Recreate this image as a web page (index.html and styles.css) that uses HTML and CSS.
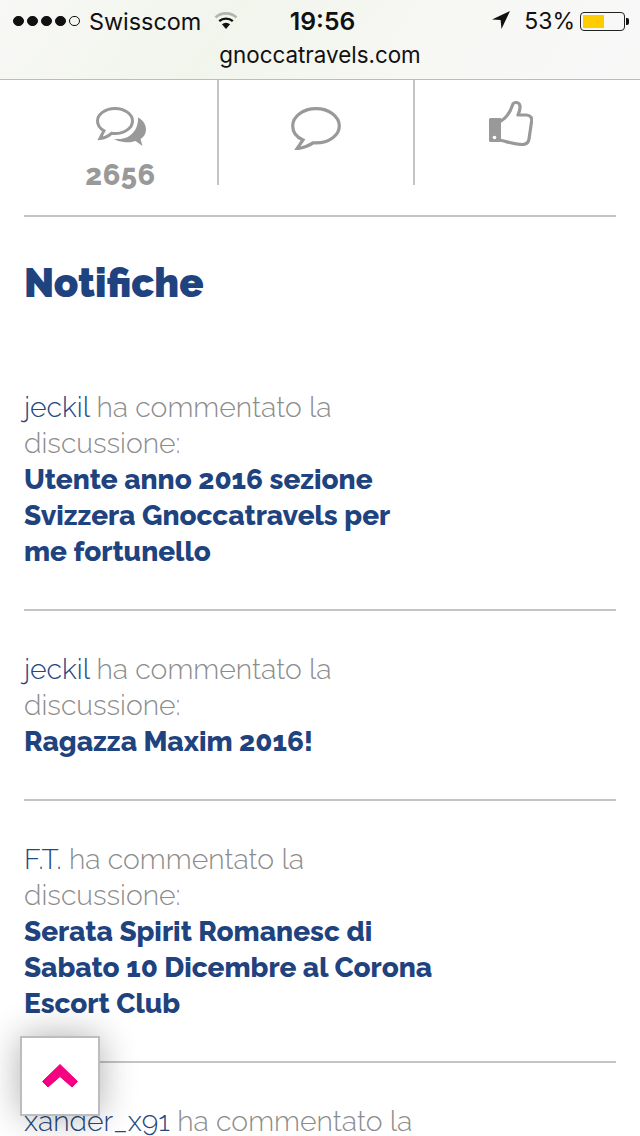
FILE: index.html
```html
<!DOCTYPE html>
<html lang="it">
<head>
<meta charset="utf-8">
<title>Notifiche</title>
<link rel="stylesheet" href="styles.css">
</head>
<body>
<header class="status">
  <div class="status-row">
    <div class="status-left">
      <span class="dots"><i class="dot"></i><i class="dot"></i><i class="dot"></i><i class="dot"></i><i class="dot empty"></i></span>
      <span class="carrier">Swisscom</span>
      <svg class="wifi" width="24" height="18" viewBox="0 0 24 18"><path d="M1.5 6.5a15.5 15.5 0 0 1 21 0" fill="none" stroke="#b4b4b0" stroke-width="2.6"/><path d="M5.2 10.2a10.2 10.2 0 0 1 13.6 0" fill="none" stroke="#111" stroke-width="2.4"/><path d="M12 18 7.9 13.3a6.2 6.2 0 0 1 8.2 0Z" fill="#111"/></svg>
    </div>
    <div class="clock">19:56</div>
    <div class="status-right">
      <svg class="arrow" width="18" height="18" viewBox="0 0 18 18"><path d="M18 0 0 8.4l8.6.6.9 9Z" fill="#111"/></svg>
      <span class="pct">53%</span>
      <span class="battery"><span class="level"></span></span><span class="nub"></span>
    </div>
  </div>
  <div class="url">gnoccatravels.com</div>
</header>

<section class="tabs">
  <div class="tab">
    <svg width="50" height="40" viewBox="0 0 50 40"><path d="M19 1.500C9.500 1.500 1.500 7 1.500 14c0 4 2.500 7.500 6.500 9.700L4 31.500c4.500-.5 8.500-2.500 11.500-5.200 1.200.2 2.300.2 3.500.2 9.500 0 17.500-5.500 17.500-12.500S28.500 1.500 19 1.500Z" fill="none" stroke="#999" stroke-width="3"/><path d="M42 10.500c5 2.500 8 7 8 12 0 4-2 7.500-5.500 9.500l2 7-7-5c-4 1.500-8 1.500-12 1-3.500-.5-7-1.500-9.500-3 6 .5 12-.5 16-3.500 5.500-4 8.500-11 8-18Z" fill="#999"/></svg>
    <span class="count">2656</span>
  </div>
  <div class="tab">
    <svg width="50" height="43" viewBox="0 0 50 43"><path d="M25 1.700C12 1.700 1.700 9.500 1.700 19c0 6 4 11.200 10.300 14l-6 8.700c6.500-1 12-3 16-5.800h3c13 0 23.300-7.500 23.300-16.900S38 1.700 25 1.700Z" fill="none" stroke="#999" stroke-width="3.200"/></svg>
  </div>
  <div class="tab thumb">
    <svg width="44" height="46" viewBox="0 0 44 46"><path d="M1.500 18H12V42H1.500A1.500 1.500 0 0 1 0 40.500V19.500A1.500 1.500 0 0 1 1.500 18Z" fill="#999"/><circle cx="5.500" cy="37.500" r="1.800" fill="#fff"/><path d="M12 21c5-3 9-8 11.500-16 1-3.500 7-3.500 7.500 1 .3 3-.7 6-2 9h8c4.500 0 6.500 3 5.500 7l-2.500 17c-.5 3.500-3 5.500-6.500 5.500-7 0-11-1.500-21-4" fill="none" stroke="#999" stroke-width="3.200" stroke-linejoin="round" stroke-linecap="round"/></svg>
  </div>
</section>

<main class="content">
  <h1 class="title">Notifiche</h1>
  <article class="note">
    <p class="line"><a class="user">jeckil</a> ha commentato la discussione:</p>
    <a class="topic">Utente anno 2016 sezione Svizzera Gnoccatravels per me fortunello</a>
  </article>
  <article class="note">
    <p class="line"><a class="user">jeckil</a> ha commentato la discussione:</p>
    <a class="topic">Ragazza Maxim 2016!</a>
  </article>
  <article class="note">
    <p class="line"><a class="user">F.T.</a> ha commentato la discussione:</p>
    <a class="topic">Serata Spirit Romanesc di Sabato 10 Dicembre al Corona Escort Club</a>
  </article>
  <article class="note">
    <p class="line"><a class="user">xander_x91</a> ha commentato la discussione:</p>
  </article>
</main>

<button class="top" aria-label="Torna su">
  <svg width="38" height="26" viewBox="0 0 38 26"><path d="M19 1.500 36.500 18.500 31 24 19 13.500 7 24 1.500 18.500Z" fill="#f5007f" stroke="#f5007f" stroke-width="1" stroke-linejoin="round"/></svg>
</button>
</body>
</html>
```
FILE: styles.css
```css
* { box-sizing: border-box; }
html, body { margin: 0; padding: 0; }
body { width: 640px; height: 1136px; overflow: hidden; background: #fff; position: relative; font-family: Raleway, Lato, "Open Sans", sans-serif; }

.status { height: 80px; background: linear-gradient(125deg, #f8f8f6 0%, #f1f5ec 35%, #f7f7f4 65%, #f8f8f8 100%); border-bottom: 1px solid #bcbcbc; font-family: Inter, Roboto, sans-serif; color: #111; }
.status-row { height: 40px; display: flex; align-items: center; justify-content: space-between; padding: 2px 11px 0 13px; font-size: 23.400px; }
.status-left { display: flex; align-items: center; gap: 9px; width: 240px; }
.dots { display: flex; gap: 3.600px; }
.dot { flex: none; width: 10.500px; height: 10.500px; border-radius: 50%; background: #111; border: 1px solid #111; display: block; }
.dot.empty { background: transparent; }
.wifi { margin-left: 4px; margin-top: -3px; }
.clock { font-weight: 600; font-size: 24.700px; margin-left: 3px; }
.status-right { display: flex; align-items: center; justify-content: flex-end; width: 240px; }
.arrow { margin-right: 14px; margin-top: -2px; }
.pct { margin-right: 5px; font-size: 23px; }
.battery { width: 45px; height: 19px; border: 1px solid #222; border-radius: 4px; padding: 2px; display: block; }
.level { display: block; width: 55%; height: 100%; background: #fc0; }
.nub { width: 3px; height: 7px; background: #111; border-radius: 0 2px 2px 0; margin-left: 1px; }
.url { text-align: center; font-size: 22.400px; line-height: 30px; }

.tabs { display: flex; height: 105px; margin-left: 24px; margin-right: 24px; }
.tab { display: flex; flex-direction: column; align-items: center; padding-top: 27px; border-right: 2px solid #c4c4c4; width: 196px; }
.tab svg { flex: none; }
.tab:first-child { width: 195px; }
.tab:last-child { border-right: 0; flex: 1; padding-right: 10px; }
.tab.thumb { padding-top: 20px; }
.count { font-size: 29px; font-weight: 800; color: #999; line-height: 20px; letter-spacing: .5px; margin-top: 18px; }

.content { margin: 30px 24px 0; border-top: 2px solid #c4c4c4; }
.title { margin: 42px 0 83px; font-size: 40px; font-weight: 900; line-height: 48px; color: #1f437f; }
.note { padding-bottom: 39px; border-bottom: 2px solid #c4c4c4; margin-bottom: 41px; }
.line { margin: -1px 0 1px; width: 400px; font-size: 28.350px; line-height: 36px; font-weight: 300; color: #8c8c8c; }
.user { color: #24487f; }
.topic { display: block; width: 412px; font-size: 27.950px; line-height: 36px; font-weight: 800; color: #1f437f; }

.top { position: absolute; left: 20px; top: 1036px; width: 80px; height: 80px; background: #fff; border: 2px solid #bdbdbd; box-shadow: 0 0 36px rgba(0,0,0,.32); padding: 0; display: flex; align-items: center; justify-content: center; }
```
